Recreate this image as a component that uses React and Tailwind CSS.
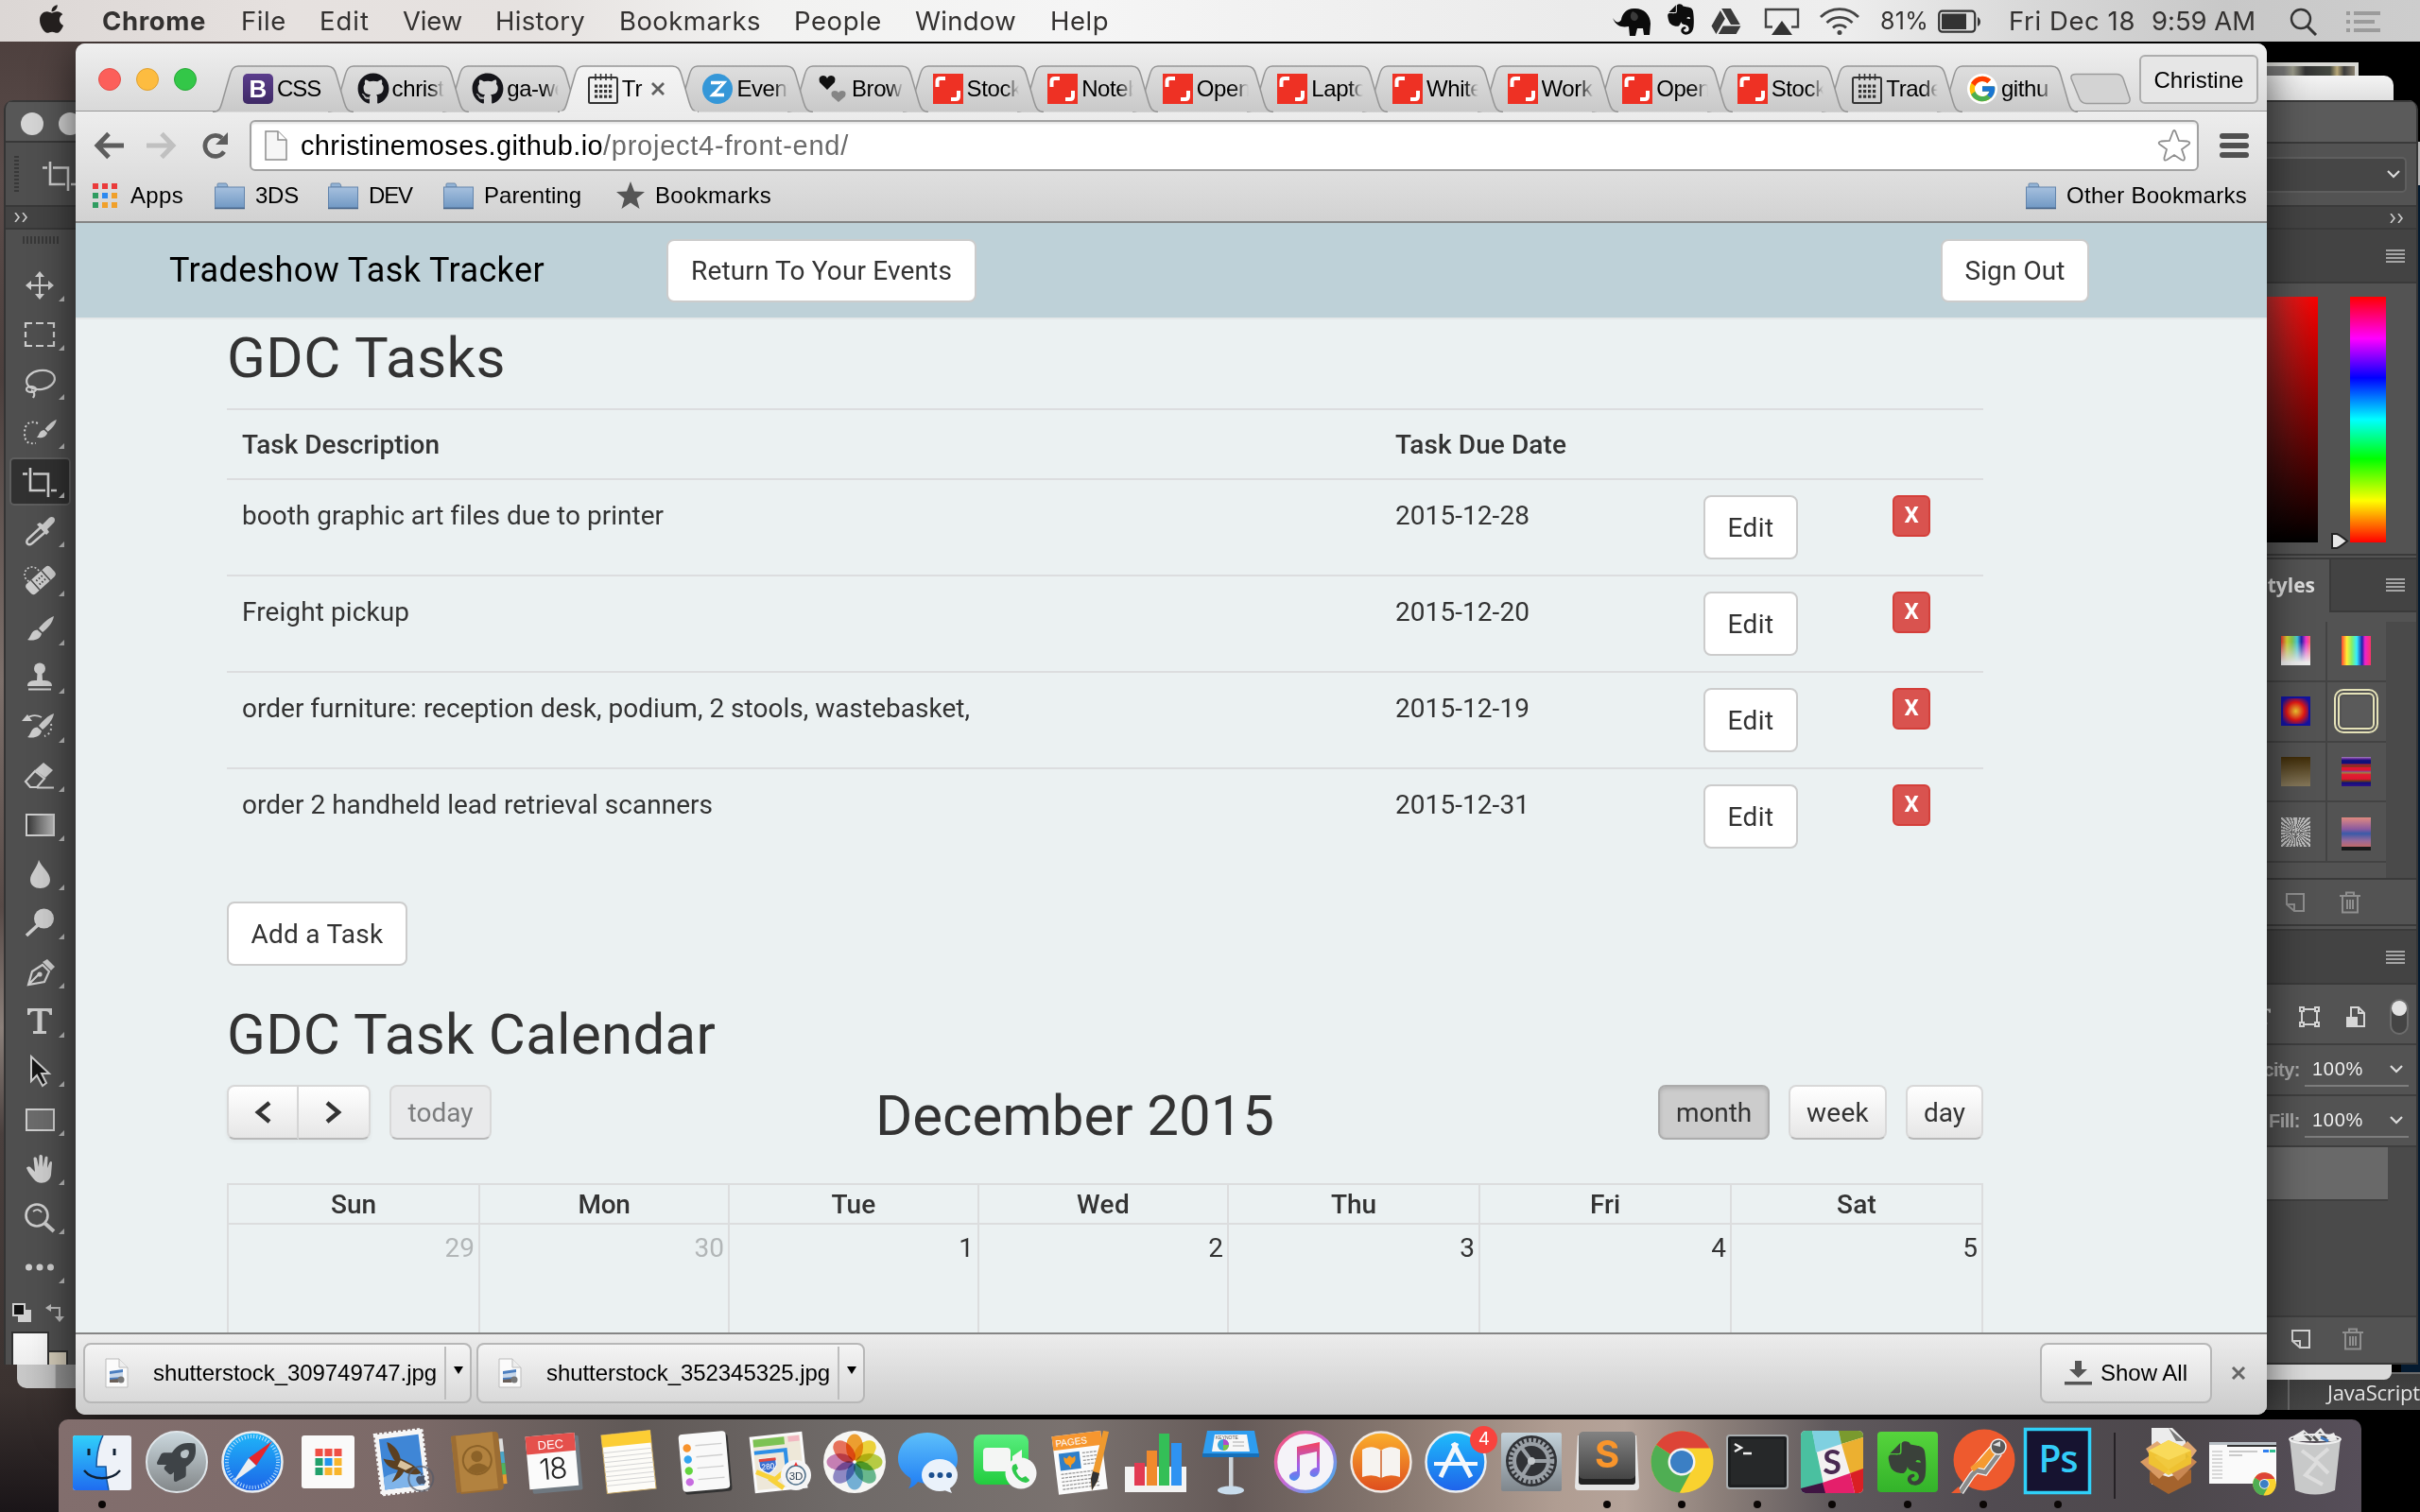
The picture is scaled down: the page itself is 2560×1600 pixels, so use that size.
import React, { useLayoutEffect, useRef } from "react";
import { FaApple, FaGithub, FaEvernote, FaGoogleDrive, FaRocket, FaHandPaper } from "react-icons/fa";
import { FcGoogle } from "react-icons/fc";

/* A single line of text whose tracking is adjusted so that it spans w pixels. */
function Fit({ w, children, className = "" }) {
  const ref = useRef(null);
  useLayoutEffect(() => {
    const el = ref.current;
    el.style.letterSpacing = "0px";
    const natural = el.getBoundingClientRect().width;
    el.style.letterSpacing = (w - natural) / el.textContent.length + "px";
  }, [w, children]);
  return (
    <span ref={ref} className={"inline-block shrink-0 whitespace-pre " + className}>
      {children}
    </span>
  );
}

/* ---------------------------------------------------------------- menu bar */

function MenuBar() {
  return (
    <div className="flex h-[44px] w-[2560px] items-center bg-[linear-gradient(90deg,#dcd7d5_0%,#e6e1df_12%,#e6e2e0_22%,#f2f2f1_32%,#f5f5f5_45%,#ebebeb_65%,#eeeeee_76%,#d8d8d8_84%,#c8c8c8_92%,#cdcdcd_100%)] pt-px font-['Inter','Liberation_Sans',sans-serif] text-[27.5px] text-[#333130]">
      <FaApple className="ml-[39px] h-[34px] w-[31px] -translate-y-[3px] text-[#231f1e]" />
      <Fit w={110} className="ml-[38px] font-bold">Chrome</Fit>
      <Fit w={48} className="ml-[37px]">File</Fit>
      <Fit w={53} className="ml-[35px]">Edit</Fit>
      <Fit w={63} className="ml-[35px]">View</Fit>
      <Fit w={95} className="ml-[35px]">History</Fit>
      <Fit w={150} className="ml-[36px]">Bookmarks</Fit>
      <Fit w={93} className="ml-[35px]">People</Fit>
      <Fit w={107} className="ml-[35px]">Window</Fit>
      <Fit w={62} className="ml-[36px]">Help</Fit>
      <svg className="ml-[532px] h-[32px] w-[42px]" viewBox="0 0 42 32">
        <path d="M1 12 C5 18 8 17 10 14 C11 7 16 2 23 2 C33 1 41 8 41 18 L40 30 L34 30 L33 23 L27 23 L25 31 L19 31 L18 21 C12 22 5 22 1 12Z" fill="#0b0b0b" />
        <path d="M22 5 C18 9 20 16 25 15 C30 12 28 7 22 5Z" fill="#3a3a3a" />
      </svg>
      <FaEvernote className="ml-[14px] h-[37px] w-[34px] -translate-y-[2px] text-[#0d0d0d]" />
      <FaGoogleDrive className="ml-[14px] h-[31px] w-[34px] text-[#3a3a3a]" />
      <svg className="ml-[23px] h-[30px] w-[38px]" viewBox="0 0 38 30">
        <path d="M9 20.500H2V2H36V20.500H29" fill="none" stroke="#444" strokeWidth="2.400" />
        <path d="M19 14 L30 29 H8Z" fill="#333" />
      </svg>
      <svg className="ml-[21px] h-[30px] w-[42px]" viewBox="0 0 42 30" fill="none" stroke="#444" strokeWidth="2.800">
        <path d="M1 10 A28 28 0 0 1 41 10" />
        <path d="M7.500 16 A19 19 0 0 1 34.500 16" />
        <path d="M14 21.500 A10 10 0 0 1 28 21.500" />
        <circle cx="21" cy="26.500" r="2.500" fill="#444" stroke="none" />
      </svg>
      <Fit w={51} className="ml-[22px] text-[25px]">81%</Fit>
      <svg className="ml-[10px] h-[26px] w-[46px]" viewBox="0 0 46 26">
        <rect x="1.200" y="1.700" width="38" height="22" rx="3.500" fill="none" stroke="#333" strokeWidth="2.200" />
        <rect x="4" y="4.500" width="26" height="16.500" fill="#333" />
        <path d="M42 8 C46 10 46 16 42 18Z" fill="#333" />
      </svg>
      <Fit w={134} className="ml-[29px]">Fri Dec 18</Fit>
      <Fit w={110} className="ml-[17px]">9:59 AM</Fit>
      <svg className="ml-[36px] h-[30px] w-[30px]" viewBox="0 0 30 30" fill="none" stroke="#333" strokeWidth="2.400">
        <circle cx="12" cy="12" r="10" />
        <path d="M19 20 L28 29" strokeWidth="3" />
      </svg>
      <svg className="ml-[30px] h-[22px] w-[36px]" viewBox="0 0 36 22" fill="#9b9b9b">
        <path d="M0 0h4v4H0zM8 0h28v4H8zM0 9h4v4H0zM8 9h22v4H8zM0 18h4v4H0zM8 18h28v4H8z" />
      </svg>
    </div>
  );
}

/* ----------------------------------------------------------------- browser */

function CalIcon() {
  return (
    <svg viewBox="0 0 32 32" className="size-8 shrink-0">
      <rect x="1" y="4" width="30" height="27" rx="1.500" fill="none" stroke="#333" strokeWidth="2" />
      <path d="M8 0v7M13.500 0v7M19 0v7M24.500 0v7" stroke="#333" strokeWidth="1.600" />
      <g fill="#333">
        {[11.5, 17, 22.5].map((y) => [7, 12, 17, 22].map((x) => <rect key={x + "-" + y} x={x} y={y} width="3.200" height="3.200" />))}
      </g>
    </svg>
  );
}

function Shutter() {
  return (
    <svg viewBox="0 0 32 32" className="size-8 shrink-0">
      <path d="M0 0h32v32H0z" fill="#ee3124" />
      <path d="M4.500 14 V8 Q4.500 5 8 5 H13" fill="none" stroke="#fff" strokeWidth="4" />
      <path d="M19 27 H24 Q27 27 27 24 V18" fill="none" stroke="#fff" strokeWidth="4" />
    </svg>
  );
}

function BootIcon() {
  return (
    <div className="flex size-8 shrink-0 items-center justify-center rounded-[5px] bg-[linear-gradient(#5b3d8c,#3f2a66)] font-['Liberation_Sans',sans-serif] text-[26px] leading-none font-bold text-white">
      B
    </div>
  );
}

function ZIcon() {
  return (
    <svg viewBox="0 0 32 32" className="size-8 shrink-0">
      <circle cx="16" cy="16" r="16" fill="#3597d8" />
      <path d="M9 9.500H22.500L11 22.500H23" fill="none" stroke="#fff" strokeWidth="3.400" />
      <path d="M11.500 19.500 L20 10" stroke="#3597d8" strokeWidth="1" />
    </svg>
  );
}

function Hearts() {
  return (
    <svg viewBox="0 0 32 32" className="size-8 shrink-0">
      <path d="M10 17 L2 9 Q0 3 5.500 2 Q9 2 10 5 Q11 2 14.500 2 Q20 3 18 9Z" fill="#111" />
      <path d="M22 30 L15 24 Q13 18 18 18 Q21 18 22 20 Q23 18 26 18 Q31 18 29 24Z" fill="#858585" />
    </svg>
  );
}

const tabs = [
  { icon: <BootIcon />, text: "CSS" },
  { icon: <FaGithub className="size-8 shrink-0 scale-[1.06] text-[#15151a]" />, text: "christ" },
  { icon: <FaGithub className="size-8 shrink-0 scale-[1.06] text-[#15151a]" />, text: "ga-we" },
  { icon: <CalIcon />, text: "Tr", active: true },
  { icon: <ZIcon />, text: "Event" },
  { icon: <Hearts />, text: "Brow" },
  { icon: <Shutter />, text: "Stock" },
  { icon: <Shutter />, text: "Noteb" },
  { icon: <Shutter />, text: "Open" },
  { icon: <Shutter />, text: "Lapto" },
  { icon: <Shutter />, text: "White" },
  { icon: <Shutter />, text: "Work" },
  { icon: <Shutter />, text: "Open" },
  { icon: <Shutter />, text: "Stock" },
  { icon: <CalIcon />, text: "Trade" },
  { icon: <FcGoogle className="size-8 shrink-0 rounded-full bg-white" />, text: "githu" },
];

const tabPath = "M0 49.500 C7 49 8 46 10 39 L18 11 C20 4 22 1 27 1 L121 1 C127 1 129 4 131 11 L139 39 C141 46 143 49 149 49.500";

function TabStrip() {
  return (
    <div className="flex h-[72px] items-start border-b border-[#979797] bg-[linear-gradient(#efefef,#e6e6e6_40%,#d9d9d9)]">
      <div className="mt-[26px] ml-[24px] flex gap-4">
        <div className="size-6 rounded-full border border-[#e2504a] bg-[#fc5f5a]" />
        <div className="size-6 rounded-full border border-[#e0a130] bg-[#fdbc40]" />
        <div className="size-6 rounded-full border border-[#28a838] bg-[#33c748]" />
      </div>
      <div className="mt-[23px] ml-[17px] flex w-[1947px]">
        {tabs.map((t, i) => (
          <div key={i} className="relative h-[49px] w-[121.6px] shrink-0" style={{ zIndex: t.active ? 40 : 20 - i }}>
            <svg className="absolute top-0 left-0 h-[50px] w-[150px]" viewBox="0 0 150 50">
              <defs>
                <linearGradient id={"tab" + i} x1="0" y1="0" x2="0" y2="1">
                  <stop offset="0" stopColor={t.active ? "#f4f4f4" : "#dedede"} />
                  <stop offset="1" stopColor={t.active ? "#ececec" : "#c9c9c9"} />
                </linearGradient>
              </defs>
              <path d={tabPath} fill={"url(#tab" + i + ")"} stroke="#959595" strokeWidth="1.500" />
              {t.active && <path d="M2 49.500H148" stroke="#ececec" strokeWidth="2" />}
            </svg>
            <div className="relative flex h-full items-center pt-px pl-[32px]">
              {t.icon}
              <span className={"ml-1 w-[55px] shrink-0 overflow-hidden text-[24px] leading-[28px] whitespace-nowrap text-black " + (t.text.length > 3 ? "tracking-[-0.4px] [mask-image:linear-gradient(90deg,#000_72%,transparent)]" : "") + (t.text === "CSS" ? "tracking-[-1px]" : "")}>
                {t.text}
              </span>
              {t.active && (
                <svg className="-ml-[25px] size-4 shrink-0" viewBox="0 0 16 16">
                  <path d="M2 2L14 14M14 2L2 14" stroke="#5f5f5f" strokeWidth="2.800" />
                </svg>
              )}
            </div>
          </div>
        ))}
      </div>
      <svg className="mt-[31px] ml-[17px] h-[34px] w-[66px]" viewBox="0 0 66 34">
        <path d="M7 1.500H50Q55 1.500 57 6L64 27Q65 32 60 32.500H18Q13 32 11 28L2 6Q1 1.500 7 1.500Z" fill="#d3d3d3" stroke="#9b9b9b" strokeWidth="1.500" />
      </svg>
      <div className="mt-[12px] ml-[8px] flex h-[52px] w-[126px] items-center justify-center rounded-[6px] border-2 border-[#adadad] bg-[#e6e6e6] text-[24px] text-black">
        <Fit w={95} className="translate-y-px leading-none">Christine</Fit>
      </div>
    </div>
  );
}

function Folder({ className = "" }) {
  return (
    <svg className={"h-[29px] w-[32px] shrink-0 " + className} viewBox="0 0 32 29">
      <defs>
        <linearGradient id="fold" x1="0" y1="0" x2="0" y2="1">
          <stop offset="0" stopColor="#a6c0de" />
          <stop offset="1" stopColor="#7199c4" />
        </linearGradient>
      </defs>
      <path d="M3 5V2Q3 1 4 1H12Q13 1 13.500 3L14 5Z" fill="#94b4d6" stroke="#6c89a9" />
      <rect x="0.500" y="5" width="31" height="22" fill="url(#fold)" stroke="#6284ac" />
      <path d="M0 27.500H32" stroke="#486689" strokeWidth="1.500" />
    </svg>
  );
}

const appColors = ["#ea3b3b", "#ea3b3b", "#ea3b3b", "#2f9c60", "#2d89f0", "#f0a02a", "#2f9c60", "#f0a02a", "#f0a02a"];

function Toolbar() {
  return (
    <div className="h-[118px] border-b-2 border-[#858585] bg-[linear-gradient(#ededed,#e2e2e2_45%,#d2d2d2)]">
      <div className="flex h-[69px] items-center pt-[2px]">
        <svg className="ml-[19px] h-[30px] w-[33px]" viewBox="0 0 33 30" fill="none" stroke="#5d5d5d" strokeWidth="5">
          <path d="M4 15H32M16 2.500L4 15L16 27.500" />
        </svg>
        <svg className="ml-[22px] h-[30px] w-[33px]" viewBox="0 0 33 30" fill="none" stroke="#c0c0c0" strokeWidth="5">
          <path d="M1 15H29M17 2.500L29 15L17 27.500" />
        </svg>
        <svg className="ml-[26px] h-[30px] w-[30px]" viewBox="0 0 30 30">
          <path d="M24 21.500 A11 11 0 1 1 22 7" fill="none" stroke="#5d5d5d" strokeWidth="4.600" />
          <path d="M28 1V14H15Z" fill="#5d5d5d" />
        </svg>
        <div className="ml-[21px] flex h-[54px] w-[2062px] items-center rounded-[6px] border-2 border-[#a2a2a2] bg-white shadow-[inset_0_2px_2px_#0000001a] text-[29px] text-black">
          <svg className="ml-[14px] h-[32px] w-[24px]" viewBox="0 0 24 32">
            <path d="M1 1H14L23 10V31H1Z" fill="#f6f6f6" stroke="#8c8c8c" strokeWidth="1.500" />
            <path d="M14 1V10H23" fill="#fff" stroke="#8c8c8c" strokeWidth="1.500" />
          </svg>
          <Fit w={320} className="ml-[14px] translate-y-px">christinemoses.github.io</Fit>
          <Fit w={260} className="translate-y-px text-[#6a6a6a]">/project4-front-end/</Fit>
          <svg className="mr-[6px] ml-auto h-[36px] w-[36px]" viewBox="0 0 36 36">
            <path d="M18 2Q19 2 20 5L23 13L32 13.500Q36 14.500 33 17L26 22L29 31Q29 35 25.500 33L18 28L10.500 33Q7 35 7.500 31L10 22L3 17Q0 14.500 4 13.500L13 13L16 5Q17 2 18 2Z" fill="#fff" stroke="#8e8e8e" strokeWidth="1.800" />
          </svg>
        </div>
        <div className="ml-[22px] flex flex-col gap-[4px]">
          <div className="h-[6px] w-[31px] rounded-[3px] bg-[#505050]" />
          <div className="h-[6px] w-[31px] rounded-[3px] bg-[#505050]" />
          <div className="h-[6px] w-[31px] rounded-[3px] bg-[#505050]" />
        </div>
      </div>
      <div className="flex h-[39px] items-center pt-px text-[24px] text-black">
        <div className="ml-[18px] grid grid-cols-3 gap-x-[4px] gap-y-[4px]">
          {appColors.map((c, i) => <div key={i} className="size-[6px]" style={{ backgroundColor: c }} />)}
        </div>
        <Fit w={56} className="ml-[14px]">Apps</Fit>
        <Folder className="ml-[33px]" />
        <Fit w={46} className="ml-[11px]">3DS</Fit>
        <Folder className="ml-[31px]" />
        <Fit w={46} className="ml-[11px]">DEV</Fit>
        <Folder className="ml-[33px]" />
        <Fit w={103} className="ml-[11px]">Parenting</Fit>
        <svg className="ml-[37px] h-[30px] w-[30px]" viewBox="0 0 30 30">
          <path d="M15 0L19 10.500L30 11L21.500 18L24.500 29L15 22.500L5.500 29L8.500 18L0 11L11 10.500Z" fill="#555" />
        </svg>
        <Fit w={123} className="ml-[11px]">Bookmarks</Fit>
        <Folder className="ml-auto" />
        <Fit w={191} className="mr-[21px] ml-[11px]">Other Bookmarks</Fit>
      </div>
    </div>
  );
}

const tasks = [
  { name: "booth graphic art files due to printer", w: 445, due: "2015-12-28" },
  { name: "Freight pickup", w: 177, due: "2015-12-20" },
  { name: "order furniture: reception desk, podium, 2 stools, wastebasket,", w: 770, due: "2015-12-19" },
  { name: "order 2 handheld lead retrieval scanners", w: 498, due: "2015-12-31" },
];

const days = [
  ["Sun", 29, 48], ["Mon", 30, 55], ["Tue", 1, 47], ["Wed", 2, 56], ["Thu", 3, 48], ["Fri", 4, 32], ["Sat", 5, 42],
];

const bsBtn = "flex items-center justify-center rounded-[8px] border-2 border-[#ccc] bg-white";
const fcBtn = "flex h-[58px] items-center justify-center border-2 border-[#d8d8d8] border-b-[#b8b8b8]";

function Page() {
  return (
    <div className="h-[1174px] overflow-hidden bg-[#ebf1f2] font-['Roboto',sans-serif] text-[28px] text-[#333]">
      <div className="flex h-[102px] items-center border-b-2 border-[#e4e7e8] bg-[#bed1d8] pl-[99px]">
        <Fit w={397} className="text-[36px] text-black">Tradeshow Task Tracker</Fit>
        <div className={bsBtn + " ml-[129px] h-[67px] w-[328px]"}>
          <Fit w={276} className="translate-y-px">Return To Your Events</Fit>
        </div>
        <div className={bsBtn + " ml-[1020px] h-[67px] w-[157px]"}>
          <Fit w={106} className="translate-y-px">Sign Out</Fit>
        </div>
      </div>
      <div className="ml-[160px] w-[1858px]">
        <h2 className="mb-[12px] flex h-[82px] items-center text-[60px] leading-none">
          <Fit w={295}>GDC Tasks</Fit>
        </h2>
        <div className="grid grid-cols-[1220px_326px_202px_110px]">
          <div className="col-span-4 grid h-[74px] grid-cols-subgrid items-center border-t-2 border-[#dcdddf] pt-[2px] font-medium">
            <Fit w={209} className="ml-[16px] justify-self-start">Task Description</Fit>
            <Fit w={181} className="ml-[16px] justify-self-start">Task Due Date</Fit>
          </div>
          {tasks.map((t) => (
            <div key={t.due} className="col-span-4 grid h-[102px] grid-cols-subgrid items-start border-t-2 border-[#dcdddf] pt-[16px]">
              <Fit w={t.w} className="ml-[16px] justify-self-start leading-[43px]">{t.name}</Fit>
              <Fit w={142} className="ml-[16px] justify-self-start leading-[43px]">{t.due}</Fit>
              <div className={bsBtn + " ml-[16px] h-[68px] w-[100px]"}>
                <Fit w={49} className="translate-y-px">Edit</Fit>
              </div>
              <div className="ml-[14px] flex h-[44px] w-[40px] items-center justify-center rounded-[6px] border-2 border-[#d43f3a] bg-[#d9534f] text-[24px] leading-none font-bold text-white">
                <span className="-translate-y-px">X</span>
              </div>
            </div>
          ))}
        </div>
        <div className={bsBtn + " mt-[40px] h-[68px] w-[191px]"}>
          <Fit w={140} className="translate-y-px">Add a Task</Fit>
        </div>
        <h2 className="flex h-[126px] items-center pt-[20px] text-[60px] leading-none">
          <Fit w={517}>GDC Task Calendar</Fit>
        </h2>
        <div className="mb-[46px] flex h-[58px] items-center">
          <div className={fcBtn + " w-[76px] rounded-l-[8px] bg-[linear-gradient(#fff,#e6e6e6)] shadow-[0_2px_4px_#0000000d]"}>
            <svg className="h-[24px] w-[18px]" viewBox="0 0 18 24"><path d="M16 2L4 12L16 22" fill="none" stroke="#333" strokeWidth="4.500" /></svg>
          </div>
          <div className={fcBtn + " w-[76px] rounded-r-[8px] border-l-0 bg-[linear-gradient(#fff,#e6e6e6)] shadow-[0_2px_4px_#0000000d]"}>
            <svg className="h-[24px] w-[18px]" viewBox="0 0 18 24"><path d="M2 2L14 12L2 22" fill="none" stroke="#333" strokeWidth="4.500" /></svg>
          </div>
          <div className={fcBtn + " ml-[20px] w-[108px] rounded-[8px] bg-[#e9eaeb] text-[#7b7c7d]"}>
            <Fit w={69} className="translate-y-px">today</Fit>
          </div>
          <Fit w={422} className="ml-[406px] translate-y-[4px] text-[60px] leading-none">December 2015</Fit>
          <div className="ml-[406px] flex h-[58px] w-[118px] items-center justify-center rounded-[8px] border-2 border-[#acacac] bg-[#cccccc] shadow-[inset_0_2px_4px_#00000026]">
            <Fit w={80} className="translate-y-px">month</Fit>
          </div>
          <div className={fcBtn + " ml-[20px] w-[104px] rounded-[8px] bg-[linear-gradient(#fff,#e6e6e6)]"}>
            <Fit w={66} className="translate-y-px">week</Fit>
          </div>
          <div className={fcBtn + " ml-auto w-[82px] rounded-[8px] bg-[linear-gradient(#fff,#e6e6e6)]"}>
            <Fit w={44} className="translate-y-px">day</Fit>
          </div>
        </div>
        <div className="grid grid-cols-[266px_264px_264px_264px_266px_266px_266px] border-l-2 border-[#dcddde]">
          {days.map(([d, n, w]) => (
            <div key={d} className="border-r-2 border-[#dcddde]">
              <div className="flex h-[44px] items-center justify-center border-y-2 border-[#dcddde] pt-px font-medium">
                <Fit w={w}>{d}</Fit>
              </div>
              <div className={"h-[140px] pt-[7px] pr-[4px] text-right leading-[36px] " + (n > 20 ? "text-[#b2b6b7]" : "")}>{n}</div>
            </div>
          ))}
        </div>
      </div>
    </div>
  );
}

function Download({ name }) {
  return (
    <div className="flex h-[64px] w-[411px] items-center rounded-[8px] border-2 border-[#b7b7b7] bg-[linear-gradient(#f4f4f4,#d9d9d9)]">
      <svg className="ml-[21px] h-[32px] w-[25px]" viewBox="0 0 25 32">
        <path d="M1 1H15L24 10V31H1Z" fill="#fbfbfb" stroke="#bbb" />
        <path d="M15 1V10H24" fill="#eee" stroke="#bbb" />
        <path d="M5 14L19 12V25H5Z" fill="#4c7fc0" />
        <path d="M5 17L19 15V20L5 21Z" fill="#c9d8ea" />
        <path d="M5 23L14 22V26H5Z" fill="#6a5f58" />
        <circle cx="17" cy="23" r="3.500" fill="#777" />
      </svg>
      <Fit w={300} className="ml-[26px]">{name}</Fit>
      <div className="ml-[8px] h-[56px] w-[2px] bg-[#bdbdbd]" />
      <svg className="ml-[8px] h-[8px] w-[10px] -translate-y-[3px]" viewBox="0 0 10 8"><path d="M0 0H10L5 8Z" /></svg>
    </div>
  );
}

function Browser() {
  return (
    <div className="absolute top-[46px] left-[80px] flex h-[1451px] w-[2318px] flex-col overflow-hidden rounded-[10px] bg-[#ddd] font-['Liberation_Sans',Arial,sans-serif]">
      <TabStrip />
      <Toolbar />
      <Page />
      <div className="flex h-[87px] items-center border-t-2 border-[#858585] bg-[linear-gradient(#ececec,#cbcbcb)] pb-[4px] text-[24px] text-black">
        <div className="ml-[8px]"><Download name="shutterstock_309749747.jpg" /></div>
        <div className="ml-[5px]"><Download name="shutterstock_352345325.jpg" /></div>
        <div className="ml-auto flex h-[64px] w-[182px] items-center rounded-[8px] border-2 border-[#b7b7b7] bg-[linear-gradient(#f6f6f6,#dadada)]">
          <svg className="ml-[24px] h-[26px] w-[29px]" viewBox="0 0 29 26" fill="#555"><path d="M11 0H18V9H24L14.500 18L5 9H11ZM0 22H29V25.500H0Z" /></svg>
          <Fit w={92} className="ml-[9px]">Show All</Fit>
        </div>
        <svg className="mr-[22px] ml-[20px] size-[16px]" viewBox="0 0 16 16"><path d="M2 2L14 14M14 2L2 14" stroke="#666" strokeWidth="3" /></svg>
      </div>
    </div>
  );
}

/* --------------------------------------------------------- photoshop, left */

const C = "#cdcdcd";
const brush = <><path d="M33 4C27 6 21 12 17 17L21 21C26 17 32 11 33 4Z" fill={C} /><path d="M15.500 18.500L20 22.500C19 28 12 31 5 29C9 27 8 19 15.500 18.500Z" fill={C} /></>;
const tools = [
  <><path d="M18 4V32M4 18H32" stroke={C} strokeWidth="2" /><path d="M18 3L23 9H13ZM18 33L23 27H13ZM3 18L9 13V23ZM33 18L27 13V23Z" fill={C} /></>,
  <path d="M3 11V6H10M14 6H22M26 6H33V11M33 15V21M33 25V30H26M22 30H14M10 30H3V25M3 21V15" fill="none" stroke={C} strokeWidth="2.200" />,
  <g fill="none" stroke={C} strokeWidth="2.200"><ellipse cx="19" cy="14" rx="15" ry="10" transform="rotate(-10 19 14)" /><ellipse cx="9" cy="24" rx="5" ry="3" /><path d="M9 25C13 27 13 30 11 33" /></g>,
  <><path d="M16 8C6 4 2 10 2 18C2 28 6 30 14 29" fill="none" stroke={C} strokeWidth="2" strokeDasharray="2 2.500" /><g transform="translate(11 1) scale(.75)">{brush}</g></>,
  <><path d="M0 9.500H5M8 3V27H24M30 27H36M11 9.500H27V34" fill="none" stroke={C} strokeWidth="2.600" /></>,
  <><path d="M19 14L5 27C3 31 6 34 10 31L24 19" fill="none" stroke={C} strokeWidth="2.400" /><path d="M15 11L18 9L21 11L28 4C32 1 36 5 33 9L26 16L28 19L25 22Z" fill={C} /></>,
  <><circle cx="10" cy="12" r="8" fill="none" stroke={C} strokeWidth="1.600" strokeDasharray="2 2" /><g transform="rotate(-42 19 18)"><rect x="2" y="11" width="34" height="14" rx="4" fill={C} /><path d="M11.500 11V25M26.500 11V25" stroke="#4d4d4d" strokeWidth="1.500" /><path d="M15 15.500h1.500M18.500 15.500H20M22 15.500h1.500M15 20.500h1.500M18.500 20.500H20M22 20.500h1.500" stroke="#444" strokeWidth="2" /></g></>,
  brush,
  <><circle cx="18" cy="8.500" r="6" fill={C} /><path d="M15.500 13H20.500L21 21C27 21 31 22 31 27H5C5 22 9 21 15 21ZM6 29.500H30V31.500H6Z" fill={C} /></>,
  <>{brush}<path d="M3 10C8 6 14 5 20 8" fill="none" stroke={C} strokeWidth="1.800" /><path d="M5 5L10 12H-1Z" fill={C} /><path d="M30 15C31 21 29 26 23 28" fill="none" stroke={C} strokeWidth="2" strokeDasharray="2 3" /></>,
  <><path d="M22 4L32 12L24 20L13 12Z" fill={C} /><path d="M13 13L3 24L8 30H15L23 21Z M15 30.500H33" fill="none" stroke={C} strokeWidth="2.200" /></>,
  <><defs><linearGradient id="tg"><stop offset="0" stopColor="#333" /><stop offset="1" stopColor="#bbb" /></linearGradient></defs><rect x="4" y="7" width="29" height="22" fill="url(#tg)" stroke={C} strokeWidth="2" /></>,
  <path d="M17 3C20 11 29 16 29 24C29 36 8 36 8 24C8 17 15 12 17 3Z" fill={C} />,
  <><circle cx="22.500" cy="13" r="10.500" fill={C} /><path d="M16 20L4 31" stroke={C} strokeWidth="3.600" /></>,
  <><path d="M6 31L10 17L21 10L28 17L23 28Z M6 31L17 20" fill="none" stroke={C} strokeWidth="2.200" /><circle cx="18" cy="20" r="2.600" fill={C} /><path d="M21 7L26 4L34 12L30 16Z" fill={C} /></>,
  <path d="M5 4H31V11H28.500C28 8 27 7 24 7H20.500V28H25V31H11V28H15.500V7H12C9 7 8 8 7.500 11H5Z" fill={C} />,
  <path d="M9 3V29L15 23L21 34L25 31L20 21H28Z" fill="#161616" stroke={C} strokeWidth="2" />,
  <rect x="4" y="7" width="29" height="22" fill="#6b6b6b" stroke={C} strokeWidth="2" />,
  <path d="M4 17C5 15 8 15 9 17L13 21L11.500 7C11.500 5 14.500 5 15 7L17 16L17.500 4.500C17.500 2.500 20.500 2.500 21 4.500L21.500 16L23.500 6C24 4 27 4.500 26.500 6.500L26 17L28.500 11C29.500 9 31.500 10 31 12L30 24C29 34 16 35 12 29C9 25 6 22 4 17Z" fill={C} />,
  <><circle cx="15" cy="15" r="11.500" fill="none" stroke={C} strokeWidth="2.600" /><path d="M11 11C15 8 18 9 20 12" fill="none" stroke={C} strokeWidth="1.800" /><path d="M23 23L33 32" stroke={C} strokeWidth="4" /></>,
  <g fill={C}><circle cx="6.500" cy="18" r="3.500" /><circle cx="18" cy="18" r="3.500" /><circle cx="29.500" cy="18" r="3.500" /></g>,
];

function ToolsPanel() {
  return (
    <>
      <div className="absolute top-[1430px] left-[18px] h-[39px] w-[80px] rounded-[10px] bg-[linear-gradient(90deg,#c9c9c9,#bdbdbd_50%,#8d8d8d_52%,#9a9a9a)]" />
      <div className="absolute top-[106px] left-[4px] flex h-[1338px] w-[110px] flex-col overflow-hidden rounded-tl-[10px] border-l-2 border-[#343434] bg-[#4f4f4f]">
        <div className="flex h-[45px] shrink-0 items-center gap-4 border-t-2 border-b-2 border-[#383838] bg-[#575757] pt-[4px] pl-[16px]">
          <div className="size-6 shrink-0 rounded-full bg-[#d4d4d4]" />
          <div className="size-6 shrink-0 rounded-full bg-[#d4d4d4]" />
        </div>
        <div className="flex h-[68px] shrink-0 items-center border-b-2 border-[#383838]">
          <div className="ml-[9px] h-[38px] w-[5px] bg-[repeating-linear-gradient(#383838_0_2px,#4f4f4f_2px_4px)]" />
          <svg className="ml-[25px] h-[36px] w-[36px] translate-y-[2px]" viewBox="0 0 36 36">{tools[4]}</svg>
        </div>
        <div className="flex h-[24px] shrink-0 items-center border-b-2 border-[#383838] bg-[#434343]">
          <svg className="ml-[9px] h-[10px] w-[15px]" viewBox="0 0 15 10" fill="none" stroke="#ccc" strokeWidth="1.600"><path d="M1 0L5 5L1 10M9 0L13 5L9 10" /></svg>
        </div>
        <div className="mt-[7px] ml-[18px] h-[8px] w-[39px] shrink-0 bg-[repeating-linear-gradient(90deg,#383838_0_2px,#4f4f4f_2px_4px)]" />
        <div className="mt-[18px] flex flex-col">
          {tools.map((t, i) => (
            <div key={i} className="flex h-[51.95px] items-center pl-[4px]">
              <div className={"flex h-[51px] w-[65px] items-center rounded-[5px] border-2 " + (i === 4 ? "border-[#5e5e5e] bg-[#313131]" : "border-transparent")}>
                <svg className="ml-[12px] h-[36px] w-[36px] shrink-0 overflow-visible" viewBox="0 0 36 36">{t}</svg>
                <svg className="ml-[2px] size-[6px] shrink-0 translate-y-[14px]" viewBox="0 0 6 6"><path d="M6 0V6H0Z" fill="#bbb" /></svg>
              </div>
            </div>
          ))}
        </div>
        <div className="mt-[11px] flex h-[22px] shrink-0 items-center">
          <svg className="ml-[7px] h-[20px] w-[20px]" viewBox="0 0 20 20"><path d="M6 7H20V20H6Z" fill="#cfcfcf" /><path d="M1 1H13V13H1Z" fill="#111" stroke="#cfcfcf" strokeWidth="2" /></svg>
          <svg className="ml-[15px] h-[20px] w-[20px]" viewBox="0 0 20 20"><path d="M4 5H15V15" fill="none" stroke="#bbb" strokeWidth="2" /><path d="M0 5L6 1V9ZM15 20L10 14H20Z" fill="#bbb" /></svg>
        </div>
        <div className="mt-[9px] flex items-end">
          <div className="ml-[6px] h-[36px] w-[40px] border-2 border-b-0 border-[#303030] bg-[linear-gradient(#f8f8f8,#ededed)]" />
          <div className="h-[16px] w-[20px] border-2 border-b-0 border-l-0 border-[#303030] bg-[#d3cbb8]" />
        </div>
      </div>
    </>
  );
}

/* -------------------------------------------------------- photoshop, right */

function Burger() {
  return <div className="h-[14px] w-[20px] bg-[repeating-linear-gradient(#a5a5a5_0_2px,transparent_2px_4px)]" />;
}

function NoteIcon({ className }) {
  return <svg className={"size-[20px] " + className} viewBox="0 0 20 20" fill="none" stroke="currentColor" strokeWidth="2"><path d="M1 1H19V19H9L1 12ZM1 12H9V19" /></svg>;
}

function Trash({ className }) {
  return <svg className={"h-[24px] w-[22px] " + className} viewBox="0 0 22 24" fill="none" stroke="currentColor" strokeWidth="2"><path d="M0 5H22M7 4V1.500H15V4M3 6V22.500H19V6M8 9V19M11 9V19M14 9V19" /></svg>;
}

const swatches = [
  "bg-[linear-gradient(transparent_20%,#eee_90%),linear-gradient(90deg,#e33,#dd3_20%,#8c5_38%,#4cd_55%,#22a_70%,#e3c_85%,#f66)]",
  "bg-[linear-gradient(90deg,#f43,#fe3_18%,#8e6_35%,#3ef_52%,#22a_70%,#e2c_80%,#f36)]",
  "border-2 border-[#1313a0] bg-[radial-gradient(#eec830,#e01515_50%,#1313a0_90%)]",
  "bg-[#5a5a5a] outline-[6px] outline-double outline-offset-2 outline-[#e5e2b8] rounded-[2px]",
  "bg-[linear-gradient(#3f2c08,#84775a)]",
  "bg-[linear-gradient(#a58ac0,#6a2a9a_6%,#10107a_12%,#10107a_22%,#b02030_26%,#6a3a1a_32%,#e01530_36%,#e01530_46%,#8a3a9a_48%,#a08040_54%,#e02030_60%,#e01530_75%,#6a3a1a_82%,#10107a_88%,#30108a)]",
  "bg-[repeating-conic-gradient(#bbb_0_7deg,#666_7deg_13deg)]",
  "bg-[linear-gradient(#e08a80,#8a5aa0_40%,#3a5aa8_55%,#9a6a9a_80%,#c06a6a)] shadow-[0_4px_0_#1a1a1a]",
];

function Field({ label, w }) {
  return (
    <div className="flex h-[54px] shrink-0 items-center border-b-2 border-[#3f3f3f] text-[20px]">
      <div className="flex w-[113px] justify-end font-bold text-[#a9a9a9]"><Fit w={w}>{label}</Fit></div>
      <div className="ml-[5px] flex h-[36px] w-[110px] items-center border-b-2 border-[#7d7d7d] pl-[8px] text-[#f0f0f0]">
        <Fit w={54}>100%</Fit>
        <svg className="ml-[28px] h-[9px] w-[14px]" viewBox="0 0 14 9" fill="none" stroke="#ddd" strokeWidth="2.200"><path d="M1 1L7 7L13 1" /></svg>
      </div>
    </div>
  );
}

function RightPanels() {
  return (
    <>
      <div className="absolute top-[66px] left-[2300px] h-[20px] w-[195px] border-4 border-[#d8d8d4] bg-[linear-gradient(90deg,#777_60%,#9a9a8a_65%,#333_72%,#444840_86%,#b8a878_90%,#3a3a3a_94%,#8a8270)]" />
      <div className="absolute top-[80px] left-[2300px] h-[60px] w-[232px] rounded-tr-[10px] bg-[linear-gradient(#f4f4f4,#dcdcdc_50%)]" />
      <div className="absolute top-[150px] left-[2556px] h-[50px] w-[4px] bg-[#b5b5b5]" />
      <div className="absolute top-[196px] left-[2540px] h-[1262px] w-[20px] bg-[#041a30]" />
      <div className="absolute top-[1452px] left-[2300px] flex h-[40px] w-[260px] items-center overflow-hidden border-t-2 border-[#6a6a6a] bg-[linear-gradient(#3c3c3c,#464646)]">
        <div className="ml-[120px] h-full w-[2px] bg-[#6a6a6a]" />
        <Fit w={98} className="ml-[40px] font-['Open_Sans',sans-serif] text-[22px] text-[#e4e4e4]">JavaScript</Fit>
      </div>
      <div className="absolute top-[1430px] left-[2300px] h-[30px] w-[230px] rounded-br-[8px] bg-[#dadada]" />
      <div className="absolute top-[106px] left-[2320px] flex h-[1338px] w-[238px] flex-col overflow-hidden rounded-tr-[10px] border-r-2 border-b-2 border-[#363636] bg-[#535353] font-['Liberation_Sans',sans-serif]">
        <div className="h-[46px] shrink-0 border-y-2 border-[#3a3a3a] bg-[#5b5b5b]" />
        <div className="flex h-[67px] shrink-0 items-center border-b-2 border-[#3a3a3a]">
          <div className="flex h-[38px] w-[226px] items-center justify-end rounded-[5px] border-2 border-[#5f5f5f] bg-[#464646] pr-[5px]">
            <svg className="h-[9px] w-[14px]" viewBox="0 0 14 9" fill="none" stroke="#ddd" strokeWidth="2.200"><path d="M1 1L7 7L13 1" /></svg>
          </div>
        </div>
        <div className="flex h-[24px] shrink-0 items-center justify-end border-b-2 border-[#3a3a3a] bg-[#434343] pr-[13px]">
          <svg className="h-[10px] w-[15px] translate-y-px" viewBox="0 0 15 10" fill="none" stroke="#ccc" strokeWidth="1.600"><path d="M1 0L5 5L1 10M9 0L13 5L9 10" /></svg>
        </div>
        <div className="flex h-[57px] shrink-0 items-center justify-end border-b-2 border-[#3a3a3a] bg-[#434343] pr-[12px]"><Burger /></div>
        <div className="flex h-[288px] shrink-0 items-start border-b-2 border-[#3a3a3a] pt-[14px]">
          <div className="h-[260px] w-[132px] bg-[linear-gradient(transparent,#000),linear-gradient(90deg,#ff9090_-10%,#c22c2c_60%,#fa0000)]" />
          <svg className="mt-[249px] ml-[13px] h-[19px] w-[20px] shrink-0" viewBox="0 0 20 19"><path d="M2 2H7Q10 3 18 9.500Q10 16 7 17H2Z" fill="#e6e6e6" stroke="#222" strokeWidth="2" /></svg>
          <div className="ml-px h-[260px] w-[38px] bg-[linear-gradient(#f00,#f0f_17%,#00f_33%,#0ff_50%,#0f0_66%,#ff0_83%,#f00)]" />
        </div>
        <div className="h-[4px] shrink-0 border-b-2 border-[#3a3a3a]" />
        <div className="flex h-[56px] shrink-0">
          <div className="flex w-[146px] items-center justify-end border-r-2 border-[#3a3a3a] pr-[15px]">
            <span className="font-['Open_Sans',sans-serif] text-[21px] font-bold text-[#dedede]">Styles</span>
          </div>
          <div className="flex flex-1 items-center justify-end border-b-2 border-[#3a3a3a] bg-[#434343] pr-[12px]"><Burger /></div>
        </div>
        <div className="flex h-[283px] shrink-0 border-b-2 border-[#3a3a3a] pt-[10px]">
          <div className="grid h-[255px] w-[204px] grid-cols-[142px_62px] grid-rows-4">
            {swatches.map((s, i) => (
              <div key={i} className={"flex items-center border-b-2 border-[#434343] " + (i % 2 === 0 ? "justify-end border-r-2 pr-[16px]" : "pl-[15px]")}>
                <div className={"h-[31px] w-[31px] " + s} />
              </div>
            ))}
          </div>
          <div className="flex-1 bg-[#4a4a4a]" />
        </div>
        <div className="flex h-[49px] shrink-0 items-center border-b-2 border-[#3a3a3a] text-[#8f8f8f]">
          <NoteIcon className="ml-[98px]" />
          <Trash className="ml-[37px]" />
        </div>
        <div className="h-[5px] shrink-0 border-b-2 border-[#3a3a3a]" />
        <div className="flex h-[57px] shrink-0 items-center justify-end border-b-2 border-[#3a3a3a] bg-[#434343] pr-[12px]"><Burger /></div>
        <div className="flex h-[64px] shrink-0 items-center border-b-2 border-[#3f3f3f] pt-[6px]">
          <svg className="ml-[63px] h-[22px] w-[22px]" viewBox="0 0 36 36">{tools[15]}</svg>
          <svg className="ml-[27px] h-[24px] w-[22px]" viewBox="0 0 22 24" fill="none" stroke="#d6d6d6" strokeWidth="2"><path d="M3 4H19V20H3Z" /><path d="M1 2H5V6H1ZM17 2H21V6H17ZM1 18H5V22H1ZM17 18H21V22H17Z" fill="#535353" /></svg>
          <svg className="ml-[28px] h-[24px] w-[20px]" viewBox="0 0 20 24"><path d="M5 12V2H13L19 8V22H11M13 2V8H19" fill="none" stroke="#d6d6d6" strokeWidth="2" /><path d="M0 12H12V23H0Z" fill="#d6d6d6" /></svg>
          <div className="ml-[26px] h-[38px] w-[20px] rounded-full border-2 border-[#6c6c6c] bg-[#444]"><div className="size-[16px] rounded-full bg-[#e2e2e2]" /></div>
        </div>
        <Field label="Opacity:" w={76} />
        <Field label="Fill:" w={33} />
        <div className="flex h-[180px] shrink-0 items-start border-b-2 border-[#3f3f3f] bg-[#4a4a4a]">
          <div className="h-[57px] w-[206px] border-b-2 border-[#3f3f3f] bg-[#696969]" />
        </div>
        <div className="flex flex-1 items-center pb-[3px] text-[#8f8f8f]">
          <NoteIcon className="ml-[104px] text-[#d4d4d4]" />
          <Trash className="ml-[34px]" />
        </div>
      </div>
    </>
  );
}

/* -------------------------------------------------------------------- dock */

function Grad({ id, a, b }) {
  return <defs><linearGradient id={id} x1="0" y1="0" x2="0" y2="1"><stop offset="0" stopColor={a} /><stop offset="1" stopColor={b} /></linearGradient></defs>;
}

const chromeLogo = (
  <>
    <circle cx="36" cy="36" r="32.500" fill="#f7cf2e" />
    <path d="M36 36L9 18A32.500 32.500 0 0 1 66 23L36 23Z" fill="#dd4437" />
    <path d="M36 36L9 18A32.500 32.500 0 0 0 34 68.500L47 44Z" fill="#4fae53" />
    <path d="M36 21.500H66A32.500 32.500 0 0 1 34 68.500L48.500 43Z" fill="#f9d22f" />
    <circle cx="36" cy="36" r="14.500" fill="#f3f3f3" />
    <circle cx="36" cy="36" r="12" fill="#3b7fc4" />
  </>
);

const petals = ["#f59c20", "#f3d62a", "#b8cf36", "#5fb98a", "#6bb0dc", "#8a83c8", "#c879b5", "#ee6a52"];

const dockIcons = [
  { dot: true, svg: <><Grad id="d1" a="#30d0fa" b="#1f6cf0" /><rect x="5" y="8" width="62" height="58" rx="3" fill="#eef2f8" /><path d="M8 8H37C31 20 30 30 30 41H40C40 50 41 58 43 66H8Q5 66 5 63V11Q5 8 8 8Z" fill="url(#d1)" /><path d="M37 8C31 20 30 30 30 41H40C40 50 41 58 43 66" fill="none" stroke="#16559c" strokeWidth="1.500" /><path d="M22 22V29M49 22V29" stroke="#102033" strokeWidth="3" /><path d="M17 45C26 56 46 56 55 45" fill="none" stroke="#102033" strokeWidth="2.400" /></> },
  { svg: <><Grad id="d2" a="#cbd8de" b="#828688" /><circle cx="36" cy="36" r="32" fill="url(#d2)" stroke="#dfe6ea" strokeWidth="2" /><g transform="translate(15 16)"><FaRocket size="41" color="#3e4347" /></g><circle cx="44" cy="28" r="4" fill="#b9c3c8" /></> },
  { svg: <><Grad id="d3" a="#1fb6f8" b="#1c63e8" /><circle cx="36" cy="36" r="31.500" fill="url(#d3)" stroke="#e9edf0" strokeWidth="2.500" /><circle cx="36" cy="36" r="27" fill="none" stroke="#bfe2fb" strokeWidth="4" strokeDasharray="1 2.200" /><path d="M57 14L40 40L32 32Z" fill="#e5262b" /><path d="M15 58L40 40L32 32Z" fill="#eceff1" /></> },
  { svg: <><rect x="8" y="8" width="56" height="56" rx="3" fill="#fafafa" />{["#ef4f45", "#ef4f45", "#ef4f45", "#21a06c", "#2295ee", "#f8b52c", "#21a06c", "#f8b52c", "#f8b52c"].map((c, i) => <rect key={i} x={22.500 + (i % 3) * 10} y={22 + Math.floor(i / 3) * 10} width="8" height="8" fill={c} />)}</> },
  { svg: <g transform="rotate(-7 36 36)"><rect x="10" y="4" width="50" height="64" fill="#f6f6f6" stroke="#f6f6f6" strokeWidth="3" strokeDasharray="3 2" /><rect x="14" y="9" width="42" height="54" fill="#3f86d6" /><path d="M14 50Q30 42 56 52V63H14Z" fill="#7fb4ea" /><path d="M22 13C30 17 34 26 34 32C40 36 48 40 54 50C48 52 40 50 36 46C34 50 28 54 22 56L30 44C24 42 18 38 16 30C20 32 26 33 28 34C24 26 22 20 22 13Z" fill="#5b4022" /><path d="M34 34L46 42L38 45L30 40Z" fill="#d9c4a0" /><circle cx="53" cy="56" r="13" fill="none" stroke="#555a66" strokeWidth="2" opacity=".7" /><g transform="translate(46 49)"><FaApple size="14" color="#4a5468" /></g></g> },
  { svg: <g transform="rotate(-6 36 36)"><path d="M14 6H56Q60 6 60 10V64Q60 68 56 68H14Z" fill="#9c6d33" /><path d="M10 6H54V66H10Z" fill="#b2823f" /><path d="M10 6H15V66H10Z" fill="#9c6d33" /><path d="M60 14H64V28H60Z" fill="#ddd" /><path d="M60 28H64V40H60Z" fill="#4aa6c8" /><path d="M60 40H64V52H60Z" fill="#4fb45c" /><path d="M60 52H64V62H60Z" fill="#e79b2e" /><circle cx="35" cy="34" r="15" fill="none" stroke="#8c6228" strokeWidth="2" /><circle cx="35" cy="30" r="6" fill="#8c6228" /><path d="M24 43Q35 32 46 43Q35 53 24 43Z" fill="#8c6228" /></g> },
  { svg: <g transform="rotate(-5 36 36)"><rect x="12" y="10" width="53" height="58" rx="2" fill="#6f7880" /><rect x="9" y="7" width="52" height="56" fill="#fbfbfb" /><rect x="9" y="7" width="52" height="19" fill="#e5504c" /><text x="35" y="22" fontSize="13" textAnchor="middle" fill="#fff" fontFamily="Liberation Sans">DEC</text><text x="35" y="54" fontSize="31" textAnchor="middle" fill="#222" fontFamily="Inter" fontWeight="300" letterSpacing="-1.500">18</text></g> },
  { svg: <g transform="rotate(-6 36 36)"><rect x="10" y="5" width="52" height="62" fill="#fdfcf8" stroke="#c9a862" /><rect x="10" y="5" width="52" height="13" fill="#fccd34" />{[24, 29, 34, 39, 44, 49, 54, 59].map((y) => <path key={y} d={"M10 " + y + "H62"} stroke="#d5d5d5" />)}</g> },
  { svg: <g transform="rotate(-5 36 36)"><rect x="13" y="8" width="50" height="61" rx="4" fill="#333" /><rect x="11" y="5" width="50" height="61" rx="4" fill="#f9f9f9" />{["#f7932d", "#33a4f0", "#63d53e", "#c76ce0"].map((c, i) => <g key={c}><circle cx="19" cy={20 + i * 12} r="4.200" fill={c} /><path d={"M28 " + (18 + i * 12) + "H56"} stroke="#cfcfcf" strokeWidth="1.400" /></g>)}</g> },
  { svg: <><g transform="rotate(-6 36 36)"><rect x="9" y="8" width="53" height="57" fill="#eee8d9" stroke="#fafafa" strokeWidth="3" /><path d="M11 10H44V18H11Z" fill="#7cc254" /><path d="M48 10H60V16H48Z" fill="#f1b7c0" /><path d="M11 24H44V60" fill="none" stroke="#2e8fe6" strokeWidth="4" /><path d="M11 44L30 54L50 40M24 52L38 64" fill="none" stroke="#f8d23a" strokeWidth="5" /><path d="M15 31H33V39Q30 45 24 47Q17 44 15 39Z" fill="#3b6fd0" stroke="#fff" /><path d="M15 31H33V34H15Z" fill="#e0483e" /><text x="24" y="42.500" fontSize="8.500" textAnchor="middle" fill="#fff" fontFamily="Liberation Sans">280</text></g><circle cx="54" cy="50" r="16" fill="#f5f5f5" /><circle cx="54" cy="50" r="10" fill="none" stroke="#51728c" strokeWidth="1.500" /><text x="54" y="54.500" fontSize="11.500" textAnchor="middle" fill="#345" fontFamily="Liberation Sans">3D</text><path d="M54 36L56 40H52Z" fill="#e33" /></> },
  { svg: <><circle cx="36" cy="36" r="33" fill="#f6f6f4" /><g className="[&>ellipse]:mix-blend-multiply">{petals.map((c, i) => <ellipse key={c} cx="36" cy="20.500" rx="9" ry="14" fill={c} opacity=".92" transform={"rotate(" + i * 45 + " 36 36)"} />)}</g><circle cx="36" cy="36" r="1.500" fill="#fff" /></> },
  { svg: <><Grad id="d12" a="#5dc0fb" b="#1f7cf3" /><path d="M34 5C52 5 66 17 66 33C66 49 52 59 36 59C31 59 27 58 24 57C22 60 18 63 14 64C17 60 17 56 16 53C8 48 3 41 3 33C3 17 16 5 34 5Z" fill="url(#d12)" /><path d="M52 66L60 69L57 62Z" fill="#eaf2fb" /><ellipse cx="47" cy="50" rx="19" ry="17" fill="#eaf2fb" /><g fill="#1c4f8e"><circle cx="38.500" cy="50" r="3" /><circle cx="47.500" cy="50" r="3" /><circle cx="57" cy="50" r="3" /></g></> },
  { svg: <><Grad id="d13" a="#58ee7e" b="#22cc3e" /><rect x="3" y="7" width="58" height="53" rx="8" fill="url(#d13)" /><rect x="13" y="21" width="29" height="25" rx="4" fill="#f4f6f4" /><path d="M44 30L54 23V44L44 37Z" fill="#f4f6f4" /><circle cx="53" cy="48" r="16.500" fill="#f5f5f5" /><path d="M45 39Q42 42 45 48Q50 57 58 58Q62 57 62 55L58 51L54 53Q49 50 48 45L50 43L48 38Z" fill="#2fc94c" /></> },
  { svg: <><g transform="rotate(-7 34 36)"><rect x="9" y="6" width="52" height="62" fill="#fbfbfb" /><rect x="9" y="6" width="52" height="15" fill="#f6962f" /><text x="12" y="17.500" fontSize="10" fill="#fff" fontFamily="Liberation Sans">PAGES</text><rect x="14" y="25" width="22" height="18" fill="#2f7fc9" /><path d="M19 29L22 31L25 28L28 31L31 29Q32 36 26 38L25 42L23 38Q18 36 19 29Z" fill="#f79a20" />{[27, 31, 35, 39, 47, 51, 55, 59, 63].map((y) => <path key={y} d={"M" + (y < 45 ? 39 : 14) + " " + y + "H54"} stroke="#999" strokeWidth="1.300" strokeDasharray="3 1" />)}</g><path d="M60 3L66 4L54 56L48 66L47 54Z" fill="#ef9a2e" /><path d="M49 46L56 48L54 56L48 66L47 54Z" fill="#333" /></> },
  { svg: <><rect x="4" y="41" width="65" height="27" fill="#f3f3f3" /><rect x="14" y="37" width="11" height="24" fill="#e23b52" /><rect x="27" y="24" width="11" height="37" fill="#f08a2c" /><rect x="40" y="6" width="11" height="55" fill="#34bf57" /><rect x="53" y="16" width="11" height="45" fill="#2f93f2" /></> },
  { svg: <><path d="M34 30H38.500V66H34Z" fill="#cdd4da" /><ellipse cx="36" cy="66" rx="14" ry="4.500" fill="#c8dcec" /><path d="M11 3H61L66 29H6Z" fill="#2e9df0" /><path d="M6 27H66V31H6Z" fill="#176fb8" /><path d="M19 7H53L56 25H16Z" fill="#f7f7f7" /><text x="20" y="12" fontSize="5" fill="#555" fontFamily="Liberation Sans">KEYNOTE</text><circle cx="28" cy="18" r="6" fill="#36a5d8" /><path d="M28 18V12A6 6 0 0 1 34 18Z" fill="#b44ac8" /><path d="M28 18H34A6 6 0 0 1 28 24Z" fill="#7cc24a" /><path d="M38 15H50M38 19H50" stroke="#aaa" /></> },
  { svg: <><defs><linearGradient id="d17" x1="0" y1="0" x2="1" y2="1"><stop offset="0" stopColor="#fb4f6f" /><stop offset=".5" stopColor="#c46bd8" /><stop offset="1" stopColor="#2dbdf5" /></linearGradient><linearGradient id="d17b" x1="0" y1="0" x2="0" y2="1"><stop offset="0" stopColor="#f6435e" /><stop offset=".6" stopColor="#a45fe8" /><stop offset="1" stopColor="#4a8cf0" /></linearGradient></defs><circle cx="36" cy="36" r="31.500" fill="#f5f3f8" stroke="url(#d17)" strokeWidth="3.500" /><path d="M27 20L51 15V45Q50 51 45 52Q39 51 41 46Q44 42 48 42V25L30 29V50Q29 55 24 56Q18 55 19 50Q22 46 27 46Z" fill="url(#d17b)" /></> },
  { svg: <><Grad id="d18" a="#fbb02c" b="#de4c1e" /><circle cx="36" cy="36" r="31.500" fill="url(#d18)" stroke="#efeae6" strokeWidth="2.500" /><path d="M36 24Q26 17 16 23V52Q27 48 36 53Q45 48 56 52V23Q46 17 36 24Z" fill="#f6f3f0" /><path d="M36 24V53" stroke="#d0632a" strokeWidth="1.500" /></> },
  { badge: "4", svg: <><Grad id="d19" a="#1ebcfb" b="#1f62ea" /><circle cx="36" cy="36" r="31.500" fill="url(#d19)" stroke="#eceff2" strokeWidth="2.500" /><path d="M37 16L20 52M33 16L52 52" stroke="#f5f8fb" strokeWidth="5" /><path d="M13 38H59" stroke="#f5f8fb" strokeWidth="4" /></> },
  { svg: <><Grad id="d20" a="#c3d2da" b="#7f868c" /><rect x="4" y="5" width="64" height="62" rx="2" fill="url(#d20)" /><circle cx="36" cy="35" r="27" fill="#303236" /><circle cx="36" cy="35" r="22" fill="none" stroke="#9aa0a6" strokeWidth="4.500" strokeDasharray="3 2" /><circle cx="36" cy="35" r="18" fill="none" stroke="#9aa0a6" strokeWidth="4" /><path d="M36 35L25 20M36 35L54 35M36 35L26 51" stroke="#9aa0a6" strokeWidth="4" /><circle cx="36" cy="35" r="4" fill="#c3c8cc" /></> },
  { dot: true, svg: <><path d="M5 8H67L70 62Q70 66 66 66H6Q2 66 2 62Z" fill="#e6e6e6" /><Grad id="d21" a="#828282" b="#454545" /><rect x="6" y="48" width="60" height="12" rx="3" fill="#222" /><rect x="6" y="4" width="60" height="50" rx="5" fill="url(#d21)" /><text x="36" y="42" fontSize="40" fontWeight="700" textAnchor="middle" fill="#f9952b" fontFamily="Inter">S</text></> },
  { dot: true, svg: chromeLogo },
  { dot: true, svg: <><rect x="4" y="8" width="64" height="56" rx="3" fill="#1c1e20" stroke="#a9adaf" strokeWidth="2" /><rect x="8" y="12" width="56" height="48" fill="#262829" /><path d="M12 17L19 21L12 25M21 27H30" fill="none" stroke="#f1f1f1" strokeWidth="2.400" /></> },
  { dot: true, svg: <><defs><clipPath id="sl"><rect x="3" y="3" width="66" height="66" rx="5" /></clipPath></defs><g clipPath="url(#sl)"><path d="M3 3H69V69H3Z" fill="#f4f1f1" /><path d="M3 3H15L29 69H3Z" fill="#4ac0a0" /><path d="M15 3H43L46 17L19 26Z" fill="#7fd0e0" /><path d="M43 3H69V10L46 17Z" fill="#7a9a2e" /><path d="M46 17L69 10V45L55 48Z" fill="#ecb030" /><path d="M55 48L69 43V69H60Z" fill="#da1f24" /><path d="M26 58L55 48L60 69H28Z" fill="#e51f6b" /><path d="M3 64L26 58L29 69H3Z" fill="#3f1442" /></g><text x="36" y="49" fontSize="36" fontWeight="700" textAnchor="middle" fill="#4a2a52" fontFamily="Lato">S</text></> },
  { dot: true, svg: <><Grad id="d25" a="#56d43c" b="#33b32a" /><rect x="4" y="4" width="64" height="64" rx="4" fill="url(#d25)" /><g transform="translate(9 11)"><FaEvernote size="53" color="#3a413a" /></g></> },
  { dot: true, svg: <><circle cx="37" cy="34" r="32.500" fill="#ee5a2e" /><path d="M46 17L56 26L36 48L24 43Q34 30 46 17Z" fill="#f59a31" stroke="#fff" strokeWidth="1.500" /><path d="M53 27L38 47L29 45L24 50L12 68" fill="none" stroke="#f2f2f2" strokeWidth="7" /><path d="M53 27L38 47L29 45L24 50L12 68" fill="none" stroke="#8a8a8a" strokeWidth="4.500" /><path d="M48 20L34 36L24 44" fill="none" stroke="#f59a31" strokeWidth="6" /><circle cx="52" cy="20" r="8" fill="#5a5a5a" stroke="#eee" strokeWidth="1.500" /><path d="M46 18L54 14V20Z" fill="#ddd" /><path d="M10 62L2 69H12Z" fill="#ee5a2e" /></> },
  { dot: true, svg: <><rect x="1.500" y="1.500" width="68" height="67" fill="#161330" stroke="#2fd0f8" strokeWidth="3.500" /><text x="36" y="47" fontSize="39" textAnchor="middle" fill="#33ccf8" fontFamily="Open Sans" fontWeight="600" letterSpacing="-1">Ps</text></> },
];

const stash = (
  <>
    <path d="M18 0H40L54 14V60H18Z" fill="#ececec" />
    <path d="M36 0L52 14L44 14Z" fill="#777" />
    <path d="M16 46L36 52L60 44V58L36 70L16 58Z" fill="#a4632d" />
    <path d="M6 36L18 28L36 44L26 54Z" fill="#d99a62" />
    <path d="M66 36L58 30L36 44L46 56Z" fill="#c98752" />
    <path d="M12 22L24 14L36 24L18 32Z" fill="#e0a874" />
    <path d="M66 24L56 14L48 22L60 32Z" fill="#e0a874" />
    <path d="M36 13L60 24V38L36 50L15 38V24Z" fill="#f1c62f" opacity=".92" />
    <path d="M15 24L36 34L60 24L36 13Z" fill="#f9da5a" />
  </>
);

function Dock() {
  return (
    <div className="absolute top-[1502px] left-[62px] flex h-[98px] w-[2436px] rounded-t-[10px] bg-[linear-gradient(90deg,#826e6d_0%,#7c6a68_15%,#605957_25%,#6f6a68_34%,#7a726f_44%,#655a58_51%,#86776f_58%,#b09d92_65%,#b5a399_68%,#8d807a_72%,#5f595c_77%,#514b51_84%,#4d484c_92%,#564e59_100%)] pl-[6px]">
      {dockIcons.map((d, i) => (
        <div key={i} className="relative flex w-[79.6px] shrink-0 flex-col items-center pt-[9px]">
          <svg className="h-[72px] w-[72px] overflow-visible" viewBox="0 0 72 72">{d.svg}</svg>
          {d.dot && <div className="mt-[5px] size-[8px] rounded-full bg-[#0a0605]" />}
          {d.badge && <div className="absolute top-[7px] right-[-4px] flex size-[29px] items-center justify-center rounded-full bg-[#f8433e] font-['Inter',sans-serif] text-[19px] text-white">{d.badge}</div>}
        </div>
      ))}
      <div className="mt-[14px] ml-[19px] h-[70px] w-[2px] bg-[#262226]" />
      <svg className="mt-[9px] ml-[20px] h-[72px] w-[72px]" viewBox="0 0 72 72">{stash}</svg>
      <svg className="mt-[9px] ml-[6px] h-[72px] w-[76px]" viewBox="0 0 76 72">
        <rect x="1" y="15" width="71" height="44" fill="#fafafa" />
        <path d="M1 15H72V18H1Z" fill="#b9c0c6" />
        <path d="M20 18H72V20H20Z" fill="#333" />
        <path d="M58 23H64V26H58Z" fill="#2f7ff0" /><path d="M65 23H71V26H65Z" fill="#2fbf90" />
        {[25, 29, 33, 37, 41, 45, 49, 53].map((y) => <path key={y} d={"M4 " + y + "H15"} stroke="#ccc" strokeWidth="1.500" />)}
        <path d="M22 25H52M22 29H36" stroke="#bbb" strokeWidth="1.500" />
        <g transform="translate(46 46) scale(.37)">{chromeLogo}</g>
      </svg>
      <svg className="mt-[9px] ml-[7px] h-[72px] w-[60px]" viewBox="0 0 60 72">
        <path d="M8 8L18 2L26 9L36 0L42 8L50 5L54 14H6Z" fill="#e9e9e9" />
        <path d="M18 6L26 13M34 5L42 12M28 9L33 14" stroke="#555" strokeWidth="3" />
        <path d="M36 10L44 14" stroke="#3f7ac0" strokeWidth="3" />
        <path d="M3 11Q30 22 57 11L51 66Q30 75 9 66Z" fill="#cfd0d0" opacity=".95" />
        <path d="M16 24L32 36L20 50L38 60M44 22L30 34L44 48" fill="none" stroke="#e6e6e6" strokeWidth="4" opacity=".7" />
        <ellipse cx="30" cy="12" rx="27" ry="5" fill="none" stroke="#f0f0f0" strokeWidth="2" />
      </svg>
    </div>
  );
}

export default function App() {
  return (
    <div className="relative h-[1600px] w-[2560px] overflow-hidden bg-black">
      <div className="absolute top-0 left-0 h-[1600px] w-[900px] bg-[linear-gradient(90deg,transparent_20%,#000_100%),linear-gradient(#4a3d3b_0%,#5b4c4a_12%,#4b3f3d_25%,#7d706b_45%,#574a47_60%,#8b807a_68%,#4a403e_75%,#3b3230_92%,#1a1518_100%)]" />
      <RightPanels />
      <ToolsPanel />
      <div className="absolute top-[46px] left-[80px] h-[1451px] w-[2318px] rounded-[10px] shadow-[0_10px_44px_#000000a0]" />
      <Browser />
      <div className="absolute top-0 left-0"><MenuBar /></div>
      <Dock />
    </div>
  );
}
